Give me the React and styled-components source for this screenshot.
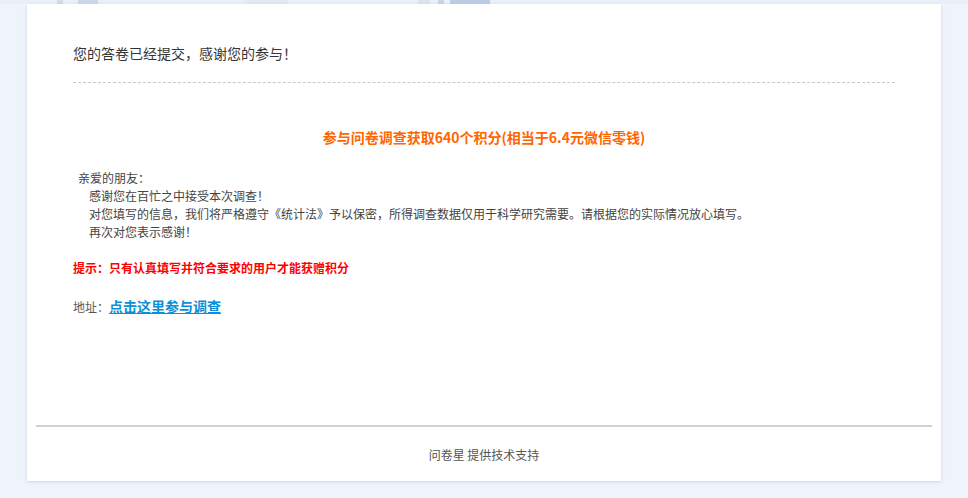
import React from "react";
import styled, { createGlobalStyle } from "styled-components";

const Global = createGlobalStyle`
  html, body { margin: 0; padding: 0; background: #eff3fa; }
  body { font-family: "Noto Sans CJK SC", "Noto Sans", "Liberation Sans", sans-serif; }
`;

const Page = styled.div`
  width: 968px;
  height: 498px;
  background: #eff3fa;
  display: flex;
  flex-direction: column;
  overflow: hidden;
`;

const TopStrip = styled.div`
  height: 4px;
  display: flex;
  background: #eaeff8;
`;

const StripBlock = styled.div`
  width: ${(p) => p.w}px;
  margin-left: ${(p) => p.gap}px;
  background: ${(p) => p.c};
`;

const Card = styled.div`
  margin-left: 27px;
  width: 914px;
  height: 477px;
  background: #fff;
  box-shadow: 0 1px 3px rgba(150, 175, 215, 0.45);
  display: flex;
  flex-direction: column;
  box-sizing: border-box;
`;

const Main = styled.div`
  flex: 1;
  padding: 39px 46px 0;
  display: flex;
  flex-direction: column;
`;

const Heading = styled.div`
  font-size: 14px;
  line-height: 20px;
  color: #333;
`;

const Dashed = styled.div`
  margin-top: 19px;
  border-top: 1px dashed #c8c8c8;
`;

const Reward = styled.div`
  margin-top: 44px;
  text-align: center;
  font-size: 14px;
  line-height: 20px;
  font-weight: bold;
  color: #ff6600;
`;

const Letter = styled.div`
  margin-top: 22px;
  display: flex;
  flex-direction: column;
`;

const Line = styled.div`
  font-size: 12px;
  line-height: 18px;
  color: #444;
  padding-left: ${(p) => (p.indent ? 16 : 5)}px;
`;

const Tip = styled.div`
  margin-top: 18px;
  font-size: 12px;
  line-height: 18px;
  font-weight: bold;
  color: #ff0000;
`;

const Address = styled.div`
  margin-top: 19px;
  font-size: 12px;
  line-height: 20px;
  color: #555;
  display: flex;
  align-items: baseline;
`;

const Link = styled.a`
  font-size: 14px;
  font-weight: bold;
  color: #0a8fd8;
  text-decoration: underline;
  cursor: pointer;
`;

const Footer = styled.div`
  margin: 0 9px;
  border-top: 2px solid #d2d2d2;
  padding: 18px 0 16px;
  text-align: center;
  font-size: 12px;
  line-height: 20px;
  color: #555;
`;

export default function App() {
  return (
    <Page>
      <Global />
      <TopStrip>
        <StripBlock gap={57} w={6} c="#d6dbe4" />
        <StripBlock gap={15} w={20} c="#ccd7ec" />
        <StripBlock gap={146} w={44} c="#e4e9f2" />
        <StripBlock gap={130} w={12} c="#dde3ee" />
        <StripBlock gap={8} w={6} c="#c8d3ea" />
        <StripBlock gap={6} w={40} c="#bccbe6" />
      </TopStrip>
      <Card>
        <Main>
          <Heading>您的答卷已经提交，感谢您的参与！</Heading>
          <Dashed />
          <Reward>参与问卷调查获取640个积分(相当于6.4元微信零钱)</Reward>
          <Letter>
            <Line>亲爱的朋友：</Line>
            <Line indent>感谢您在百忙之中接受本次调查！</Line>
            <Line indent>
              对您填写的信息，我们将严格遵守《统计法》予以保密，所得调查数据仅用于科学研究需要。请根据您的实际情况放心填写。
            </Line>
            <Line indent>再次对您表示感谢！</Line>
          </Letter>
          <Tip>提示：只有认真填写并符合要求的用户才能获赠积分</Tip>
          <Address>
            地址：<Link>点击这里参与调查</Link>
          </Address>
        </Main>
        <Footer>问卷星 提供技术支持</Footer>
      </Card>
    </Page>
  );
}
